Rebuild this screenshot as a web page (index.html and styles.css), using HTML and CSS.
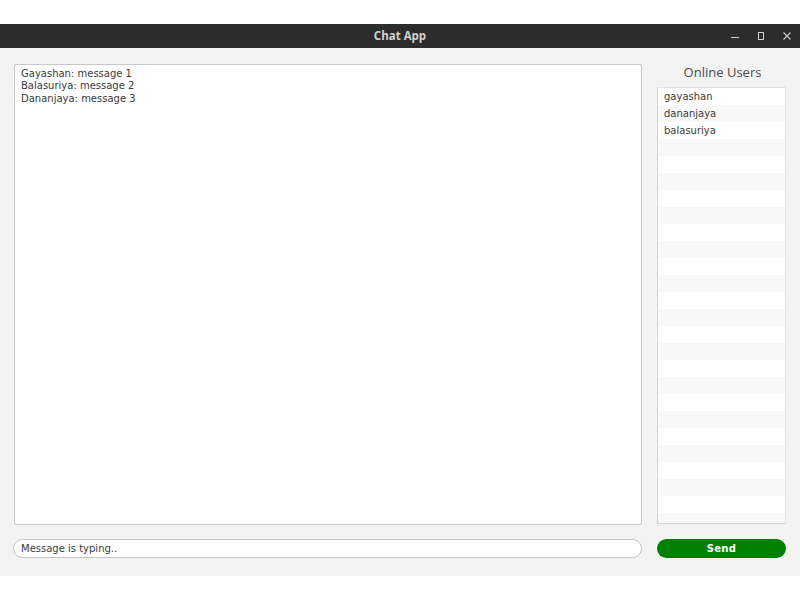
FILE: index.html
```html
<!DOCTYPE html>
<html>
<head>
<meta charset="utf-8">
<link rel="stylesheet" href="styles.css">
<title>Chat App</title>
</head>
<body>
<div class="top-gap"></div>
<div class="window">
  <div class="titlebar">
    <span class="title">Chat App</span>
    <div class="controls">
      <svg class="ctl" width="10" height="10" viewBox="0 0 10 10"><path d="M1 6.5h8" stroke="#cfcfcf" stroke-width="1"/></svg>
      <svg class="ctl" width="10" height="10" viewBox="0 0 10 10"><rect x="2.5" y="1.5" width="5" height="7" fill="none" stroke="#cfcfcf" stroke-width="1"/></svg>
      <svg class="ctl" width="10" height="10" viewBox="0 0 10 10"><path d="M1.5 1.5l7 7M8.5 1.5l-7 7" stroke="#cfcfcf" stroke-width="1.1"/></svg>
    </div>
  </div>
  <div class="content">
    <div class="main">
      <div class="chat-area">
        <div class="msg">Gayashan: message 1</div>
        <div class="msg">Balasuriya: message 2</div>
        <div class="msg">Dananjaya: message 3</div>
      </div>
      <div class="sidebar">
        <div class="online-label">Online Users</div>
        <div class="user-list">
          <div class="row">gayashan</div>
          <div class="row">dananjaya</div>
          <div class="row">balasuriya</div>
          <div class="row"></div><div class="row"></div><div class="row"></div>
          <div class="row"></div><div class="row"></div><div class="row"></div>
          <div class="row"></div><div class="row"></div><div class="row"></div>
          <div class="row"></div><div class="row"></div><div class="row"></div>
          <div class="row"></div><div class="row"></div><div class="row"></div>
          <div class="row"></div><div class="row"></div><div class="row"></div>
          <div class="row"></div><div class="row"></div><div class="row"></div>
          <div class="row"></div><div class="row"></div>
        </div>
      </div>
    </div>
    <div class="bottom">
      <div class="input">Message is typing..</div>
      <button class="send">Send</button>
    </div>
  </div>
</div>
</body>
</html>
```
FILE: styles.css
```css
html, body {
  margin: 0;
  padding: 0;
  background: #ffffff;
  width: 800px;
  height: 600px;
  overflow: hidden;
  font-family: "DejaVu Sans", sans-serif;
}
.top-gap {
  height: 24px;
}
.window {
  width: 800px;
  display: flex;
  flex-direction: column;
}
.titlebar {
  height: 24px;
  background: #2c2c2c;
  display: flex;
  align-items: center;
  justify-content: center;
  position: relative;
}
.title {
  font-family: "Open Sans", sans-serif;
  font-weight: 700;
  font-size: 11.5px;
  color: #d2d2d2;
  margin-top: -1px;
}
.controls {
  position: absolute;
  right: 8px;
  top: 7px;
  display: flex;
  gap: 16px;
}
.ctl {
  display: block;
}
.content {
  height: 528px;
  background: #f3f3f3;
  box-sizing: border-box;
  padding: 16px 14px 0 14px;
  display: flex;
  flex-direction: column;
}
.main {
  display: flex;
  gap: 15px;
  height: 461px;
}
.chat-area {
  width: 628px;
  height: 461px;
  box-sizing: border-box;
  background: #ffffff;
  border: 1px solid #c8c8c8;
  border-radius: 2px;
  padding: 3px 6px;
}
.msg {
  font-size: 10px;
  line-height: 12.3px;
  color: #3a3a3a;
}
.sidebar {
  width: 129px;
  display: flex;
  flex-direction: column;
}
.online-label {
  font-family: "Open Sans", sans-serif;
  font-size: 13px;
  color: #4a4a4a;
  text-align: center;
  height: 23px;
  line-height: 17px;
  padding-left: 2px;
}
.user-list {
  height: 437px;
  overflow: hidden;
  box-sizing: border-box;
  border-left: 1px solid #d4d4d4;
  border-right: 1px solid #e4e4e4;
  border-top: 1px solid #e2e2e2;
  border-bottom: 1px solid #d0d0d0;
  background: #f9f9f9;
}
.row {
  height: 17px;
  line-height: 17px;
  font-size: 10px;
  color: #3a3a3a;
  padding-left: 6px;
  background: #ffffff;
}
.row:nth-child(even) {
  background: #f8f8f8;
}
.bottom {
  display: flex;
  gap: 15px;
  margin-top: 14px;
  align-items: flex-start;
}
.input {
  width: 629px;
  margin-left: -1px;
  height: 19px;
  box-sizing: border-box;
  background: #ffffff;
  border: 1px solid #c4c4c4;
  border-radius: 10px;
  font-size: 10px;
  line-height: 17px;
  color: #3a3a3a;
  padding-left: 7px;
}
.send {
  width: 129px;
  height: 19px;
  margin: 0;
  padding: 0;
  border: none;
  border-radius: 10px;
  background: #008000;
  color: #ffffff;
  font-family: "DejaVu Sans", sans-serif;
  font-weight: 700;
  font-size: 10px;
  line-height: 19px;
  letter-spacing: 0.3px;
}
```
